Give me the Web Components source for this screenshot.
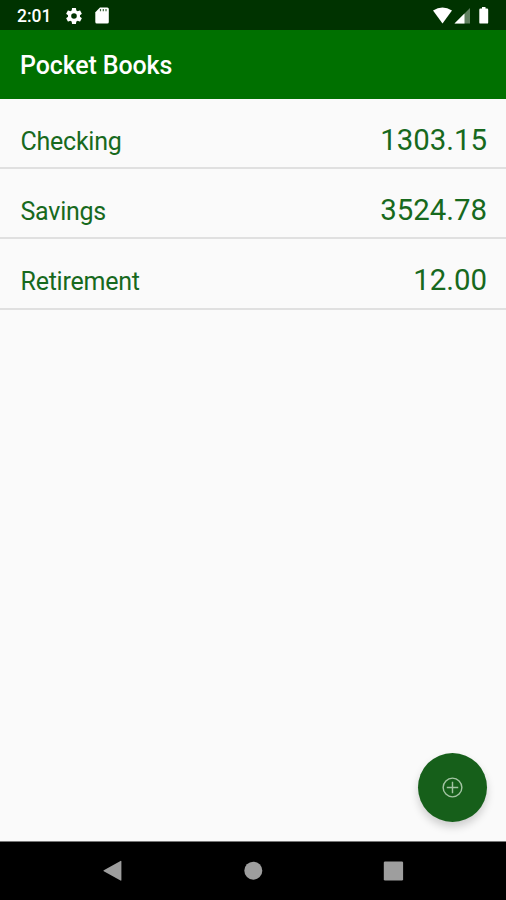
<!DOCTYPE html>
<html lang="en">
<head>
<meta charset="utf-8">
<title>Pocket Books</title>
<style>
  html, body {
    margin: 0;
    height: 100%;
  }

  body {
    font-family: Roboto, sans-serif;
    background-color: #fafafa;
    overflow: hidden;
  }
</style>
</head>
<body>
<pocket-app></pocket-app>

<script>
class StatusBar extends HTMLElement {
  constructor() {
    super();
    this.attachShadow({ mode: 'open' });
    this.shadowRoot.innerHTML = `
      <style>
      :host {
        display: flex;
        align-items: center;
        box-sizing: border-box;
        height: 30px;
        padding: 2px 16px 0 17px;
        background-color: #003300;
        color: white;
      }

      .time {
        width: 49px;
        font-size: 17.5px;
        font-weight: 500;
        line-height: 28px;
      }

      svg {
        display: block;
        fill: white;
      }

      .gear {
        margin-bottom: 1px;
      }

      .card {
        margin: 0 0 1px 12.5px;
      }

      .system {
        margin: 0 0 1px auto;
      }
      </style>

      <span class="time">2:01</span>
      <svg class="gear" width="16" height="16" viewBox="2 2 20 20">
        <path d="M19.43 12.98c.04-.32.07-.64.07-.98s-.03-.66-.07-.98l2.11-1.65c.19-.15.24-.42.12-.64l-2-3.46c-.12-.22-.39-.3-.61-.22l-2.49 1c-.52-.4-1.08-.73-1.69-.98l-.38-2.65A.49.49 0 0 0 14 2h-4c-.25 0-.46.18-.49.42l-.38 2.65c-.61.25-1.17.59-1.69.98l-2.49-1c-.23-.09-.49 0-.61.22l-2 3.46c-.13.22-.07.49.12.64l2.11 1.65c-.04.32-.07.65-.07.98s.03.66.07.98l-2.11 1.65c-.19.15-.24.42-.12.64l2 3.46c.12.22.39.3.61.22l2.49-1c.52.4 1.08.73 1.69.98l.38 2.65c.03.24.24.42.49.42h4c.25 0 .46-.18.49-.42l.38-2.65c.61-.25 1.17-.59 1.69-.98l2.49 1c.23.09.49 0 .61-.22l2-3.46c.12-.22.07-.49-.12-.64l-2.11-1.65zM12 15.5a3.5 3.5 0 1 1 0-7 3.5 3.5 0 0 1 0 7z"/>
      </svg>
      <svg class="card" width="14" height="17" viewBox="0 0 14 17">
        <path d="M5 .5h7.3q1.5 0 1.5 1.5v13q0 1.5-1.5 1.5H1.8q-1.5 0-1.5-1.5V5.3z"/>
        <path d="M5.5 2v2.3M8.3 2v2.3M11 2v2.3" stroke="#003300" stroke-width="1.2" opacity=".75"/>
      </svg>
      <svg class="system" width="58" height="20" viewBox="0 0 58 20">
        <path d="M1 4.5Q10.500-1.500 20 4.500L10.500 17.500z"/>
        <path d="M38 2v15.500H22.500z" opacity=".38"/>
        <path d="M32.500 7.500v10h-10z"/>
        <path d="M50 1h3.500v1.500h1.500q1.200 0 1.200 1.200v12.700q0 1.200-1.200 1.200h-6.500q-1.200 0-1.200-1.200V3.700q0-1.200 1.200-1.200H50z"/>
      </svg>
    `;
  }
}

customElements.define('status-bar', StatusBar);

class AppHeader extends HTMLElement {
  constructor() {
    super();
    this.attachShadow({ mode: 'open' });
    this.shadowRoot.innerHTML = `
      <style>
      :host {
        display: block;
        height: 68.5px;
        padding-left: 20px;
        background-color: #007000;
      }

      h1 {
        margin: 0;
        color: white;
        font-size: 25px;
        font-weight: 500;
        letter-spacing: -0.13px;
        line-height: 72px;
      }
      </style>

      <h1><slot></slot></h1>
    `;
  }
}

customElements.define('app-header', AppHeader);

class AccountRow extends HTMLElement {
  constructor() {
    super();
    this.attachShadow({ mode: 'open' });
    this.shadowRoot.innerHTML = `
      <style>
      :host {
        display: flex;
        align-items: baseline;
        justify-content: space-between;
        box-sizing: border-box;
        height: 70.4px;
        padding: 24.2px 19px 0 20.5px;
        border-bottom: 2px solid #e0e0e0;
        color: #17691d;
      }

      .name {
        font-size: 25px;
        letter-spacing: -0.24px;
      }

      .amount {
        font-size: 29.4px;
        line-height: 35px;
      }
      </style>

      <span class="name"><slot></slot></span>
      <span class="amount"><slot name="amount"></slot></span>
    `;
  }
}

customElements.define('account-row', AccountRow);

class AddButton extends HTMLElement {
  constructor() {
    super();
    this.attachShadow({ mode: 'open' });
    this.shadowRoot.innerHTML = `
      <style>
      :host {
        display: block;
      }

      button {
        display: flex;
        align-items: center;
        justify-content: center;
        width: 69px;
        height: 69px;
        padding: 0;
        border: none;
        border-radius: 50%;
        background-color: #165f1a;
        box-shadow: 0 5px 9px rgba(0, 0, 0, 0.18);
      }
      </style>

      <button aria-label="Add account">
        <svg width="21" height="21" viewBox="0 0 22 22" fill="none" stroke="#a3c4a3" stroke-width="1.5">
          <circle cx="11" cy="11" r="9.8"/>
          <path d="M11 5v12M5 11h12"/>
        </svg>
      </button>
    `;
  }
}

customElements.define('add-button', AddButton);

class NavigationBar extends HTMLElement {
  constructor() {
    super();
    this.attachShadow({ mode: 'open' });
    this.shadowRoot.innerHTML = `
      <style>
      :host {
        display: flex;
        align-items: center;
        justify-content: space-between;
        box-sizing: border-box;
        height: 59px;
        padding: 0 102px;
        border-top: 1px solid #777777;
        background-color: black;
      }

      svg {
        display: block;
        fill: #9e9e9e;
      }
      </style>

      <svg width="22" height="22" viewBox="0 0 22 22"><path d="M18.500 .9q.9-.5.9.6v18.400q0 1.100-.9.6L1.800 11.300q-.9-.5 0-1z"/></svg>
      <svg width="22" height="22" viewBox="0 0 22 22"><circle cx="11.3" cy="10.7" r="9"/></svg>
      <svg width="22" height="22" viewBox="0 0 22 22"><rect x="1.8" y="1.5" width="19.3" height="19" rx="1.3"/></svg>
    `;
  }
}

customElements.define('navigation-bar', NavigationBar);

class PocketApp extends HTMLElement {
  constructor() {
    super();
    this.attachShadow({ mode: 'open' });
    this.shadowRoot.innerHTML = `
      <style>
      :host {
        display: flex;
        flex-direction: column;
        height: 100vh;
        background-color: #fafafa;
      }

      main {
        flex: 1;
        position: relative;
      }

      add-button {
        position: absolute;
        right: 19px;
        bottom: 19px;
      }
      </style>

      <status-bar></status-bar>
      <app-header>Pocket Books</app-header>
      <main>
        <account-row>Checking<span slot="amount">1303.15</span></account-row>
        <account-row>Savings<span slot="amount">3524.78</span></account-row>
        <account-row>Retirement<span slot="amount">12.00</span></account-row>
        <add-button></add-button>
      </main>
      <navigation-bar></navigation-bar>
    `;
  }
}

customElements.define('pocket-app', PocketApp);
</script>
</body>
</html>
